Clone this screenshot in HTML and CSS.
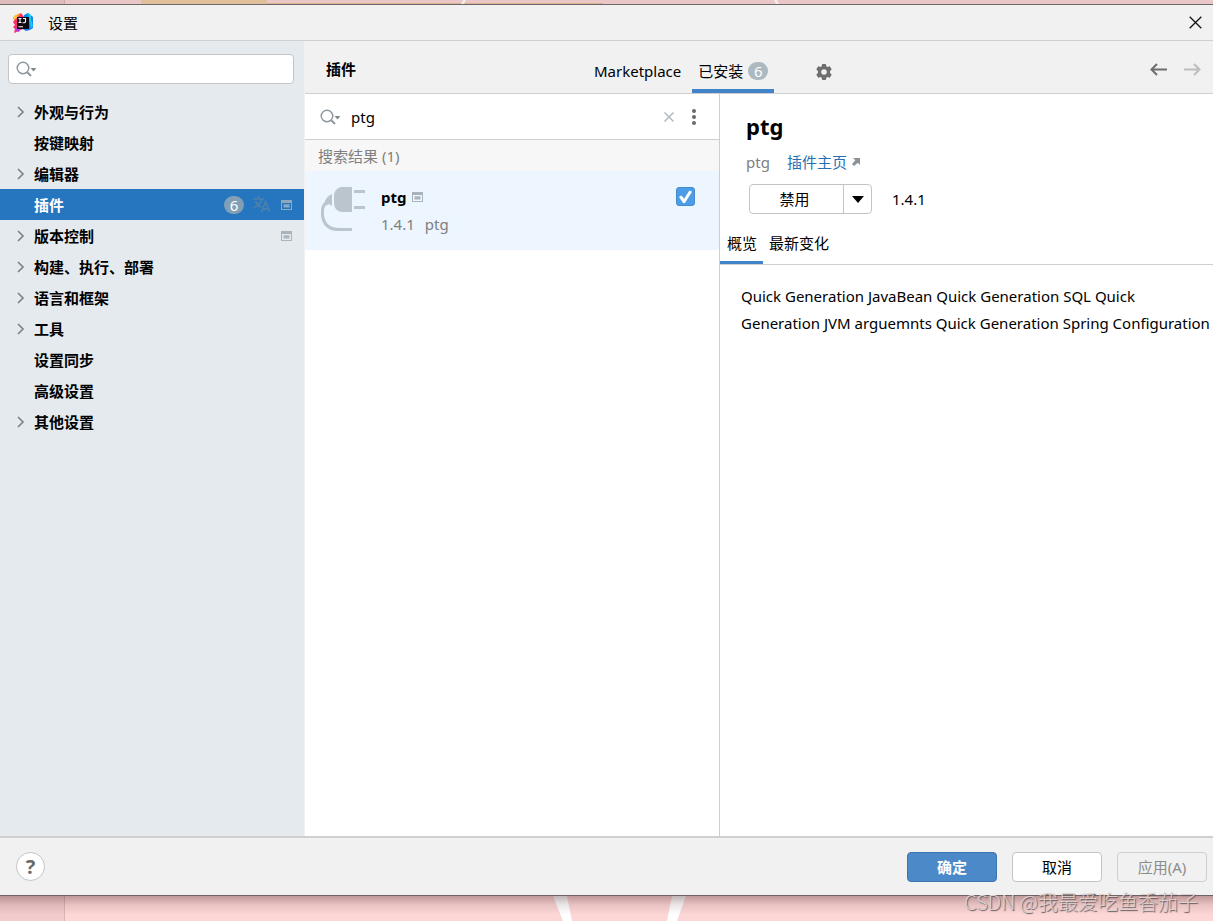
FILE: index.html
```
<!DOCTYPE html>
<html lang="zh-CN">
<head>
<meta charset="utf-8">
<title>设置</title>
<link rel="stylesheet" href="styles.css">
</head>
<body>
<svg class="defs" aria-hidden="true">
  <symbol id="chevron" viewBox="0 0 8 12"><path d="M1 1l5 5-5 5" fill="none" stroke="#7f8487" stroke-width="1.700"/></symbol>
  <symbol id="search" viewBox="0 0 22 16"><circle cx="7" cy="7" r="5.800" fill="none" stroke="#8b969d" stroke-width="1.400"/><path d="M11 11l4 4" stroke="#8b969d" stroke-width="2"/><path d="M14.500 7h6l-3 3.500z" fill="#7f8b91"/></symbol>
  <symbol id="project" viewBox="0 0 11 10"><path d="M0 0h11v10H0zM1 3v6h9V3z" fill="currentColor" fill-rule="evenodd"/><path d="M2.500 4.300h6v3.200h-6z" fill="currentColor"/></symbol>
</svg>
<div class="desktop-top"><svg viewBox="0 0 1213 4" preserveAspectRatio="none" aria-hidden="true"><path fill="#ebc6c7" d="M0 0h1213v4H0z"/><path fill="#dfbcbc" d="M0 0h64v4H0z"/><path fill="#c9aaab" d="M64 0h1v4h-1z"/><path fill="#dfc09b" d="M141 0h126v4H141z"/><path fill="#d7b492" d="M267 3h336v1H267z"/><path fill="#f1eded" d="M461 4l2-4h3l-2 4zM774 0h3l2 4h-3z"/></svg></div>
<div class="window">
  <header class="titlebar">
    <svg class="logo" viewBox="0 0 20 20" aria-hidden="true">
      <path fill="#ff9a1f" d="M1 3l6-3 3 3-2 7-7-1 1-2-2-1z"/>
      <path fill="#fc2d67" d="M0 9l3-4 3-2 2-3 3 4-1 12-9 4 1-4-2-2 2-2z"/>
      <path fill="#b93bd8" d="M2 15l6-1-2 5-3-1-1 2z"/>
      <path fill="#1286f5" d="M11 2l4-2 5 4v11l-3 2-4 1-5-3z"/>
      <path fill="#19c6ef" d="M15 0l3 2v4l2 7-2 2-2-8z"/>
      <path fill="#ffc34a" d="M1 3l3-1v3l-3 2z"/>
      <path fill="#120a12" d="M4 4h12v12H4z"/>
      <path d="M5.500 5.500h3M7 5.500v4M5.500 9.500h3M10 5.500h2.500v3.500l-1 .8H9.600M5.500 13.800h4.500" stroke="#fff" stroke-width="1.100" fill="none"/>
    </svg>
    <h1 class="title">设置</h1>
    <button class="icon-button" aria-label="关闭"><svg width="13" height="13" viewBox="0 0 13 13"><path d="M.7.700l11.600 11.600M12.300.700L.7 12.300" stroke="#111" stroke-width="1.300"/></svg></button>
  </header>
  <div class="content">
    <aside class="sidebar">
      <label class="side-search"><svg width="22" height="16"><use href="#search"/></svg><input type="text" aria-label="搜索设置"></label>
      <ul class="tree">
        <li><svg class="arrow"><use href="#chevron"/></svg><span>外观与行为</span></li>
        <li><i class="arrow"></i><span>按键映射</span></li>
        <li><svg class="arrow"><use href="#chevron"/></svg><span>编辑器</span></li>
        <li class="selected"><i class="arrow"></i><span>插件</span>
          <b class="count">6</b>
          <svg class="translate" viewBox="0 0 18 17" aria-hidden="true"><path d="M0 3h11M5.500 0v3M9 3C8 7 4 10 1 11.500M2.500 5c1 3 3.500 5 6 6.500M8.500 16l4-10 4.500 10M10 12.800h5.500" fill="none" stroke="currentColor" stroke-width="1.700"/></svg>
          <svg class="project"><use href="#project"/></svg></li>
        <li><svg class="arrow"><use href="#chevron"/></svg><span>版本控制</span><svg class="project"><use href="#project"/></svg></li>
        <li><svg class="arrow"><use href="#chevron"/></svg><span>构建、执行、部署</span></li>
        <li><svg class="arrow"><use href="#chevron"/></svg><span>语言和框架</span></li>
        <li><svg class="arrow"><use href="#chevron"/></svg><span>工具</span></li>
        <li><i class="arrow"></i><span>设置同步</span></li>
        <li><i class="arrow"></i><span>高级设置</span></li>
        <li><svg class="arrow"><use href="#chevron"/></svg><span>其他设置</span></li>
      </ul>
    </aside>
    <main class="main">
      <div class="toolbar">
        <h2 class="toolbar-title">插件</h2>
        <nav class="tabs">
          <button class="tab">Marketplace</button>
          <button class="tab active">已安装<b class="count">6</b></button>
        </nav>
        <button class="icon-button gear" aria-label="插件设置"><svg width="16" height="16" viewBox="0 0 16 16"><path fill="#6e6e6e" fill-rule="evenodd" d="M6.200 0h3.600l.5 2.300 1.300.8 2.300-.8 1.800 3.100L14 7v2l1.700 1.600-1.800 3.100-2.300-.8-1.300.8-.5 2.300H6.200l-.5-2.300-1.300-.8-2.300.8-1.800-3.100L2 9V7L.3 5.400l1.800-3.100 2.300.8 1.300-.8zM8 5.200a2.800 2.800 0 1 0 0 5.600 2.800 2.800 0 0 0 0-5.600z"/></svg></button>
        <div class="history">
          <button class="icon-button" aria-label="后退"><svg width="17" height="13" viewBox="0 0 17 13"><path d="M17 6.500H2M7 1L1.500 6.500 7 12" fill="none" stroke="#6e6e6e" stroke-width="2"/></svg></button>
          <button class="icon-button" aria-label="前进" disabled><svg width="17" height="13" viewBox="0 0 17 13"><path d="M0 6.500h15M10 1l5.500 5.500L10 12" fill="none" stroke="#bdbdbd" stroke-width="2"/></svg></button>
        </div>
      </div>
      <div class="panes">
        <section class="list">
          <div class="filter">
            <svg width="22" height="16"><use href="#search"/></svg>
            <input type="text" value="ptg" aria-label="搜索插件">
            <button class="icon-button" aria-label="清除"><svg width="10" height="10" viewBox="0 0 10 10"><path d="M.5.500l9 9M9.500.500l-9 9" stroke="#adb4b8" stroke-width="1.300"/></svg></button>
            <button class="icon-button" aria-label="更多"><svg width="4" height="16" viewBox="0 0 4 16"><g fill="#6a6a6a"><circle cx="2" cy="2" r="2"/><circle cx="2" cy="8" r="2"/><circle cx="2" cy="14" r="2"/></g></svg></button>
          </div>
          <h3 class="results">搜索结果 (1)</h3>
          <article class="plugin">
            <svg class="plug" viewBox="0 0 44 44" aria-hidden="true"><path fill="#bac5ce" d="M20 0h11v25H20q-7-2-7-9V9q0-7 7-9zM33 3h11v3H33zM33 19h11v3H33zM4 14q2-5 7-7v12l-3-2-4 2z"/><path d="M6 15q-4.500 3-4.500 9v4Q3 42 17 42.500h14" fill="none" stroke="#bac5ce" stroke-width="3"/></svg>
            <div class="plugin-text">
              <h4>ptg <svg class="project"><use href="#project"/></svg></h4>
              <p><span>1.4.1</span><span>ptg</span></p>
            </div>
            <input class="check" type="checkbox" checked aria-label="启用 ptg">
          </article>
        </section>
        <section class="details">
          <div class="summary">
            <h2>ptg</h2>
            <p class="vendor"><span>ptg</span><a href="#">插件主页<svg width="8" height="8" viewBox="0 0 8 8"><path d="M1 0h7v7L5.800 4.800 2 8 0 6l3.300-3.700z" fill="#8b9298"/></svg></a></p>
            <div class="actions">
              <div class="split"><button>禁用</button><button class="drop" aria-label="更多操作"><svg width="12" height="7" viewBox="0 0 12 7"><path d="M0 0h12L6 7z"/></svg></button></div>
              <span>1.4.1</span>
            </div>
          </div>
          <nav class="subtabs"><button class="active">概览</button><button>最新变化</button></nav>
          <p class="description">Quick Generation JavaBean Quick Generation SQL Quick<br>Generation JVM arguemnts Quick Generation Spring Configuration</p>
        </section>
      </div>
    </main>
  </div>
  <footer class="footer">
    <button class="help" aria-label="帮助">?</button>
    <button class="button primary">确定</button>
    <button class="button">取消</button>
    <button class="button" disabled>应用(A)</button>
  </footer>
</div>
<div class="desktop-bottom"><svg viewBox="0 0 1213 25" preserveAspectRatio="none" aria-hidden="true"><defs><linearGradient id="shade" x2="0" y2="1"><stop stop-color="#502a2e" stop-opacity=".36"/><stop offset=".35" stop-color="#502a2e" stop-opacity=".12"/><stop offset=".75" stop-color="#502a2e" stop-opacity="0"/></linearGradient></defs><path fill="#fdd6d6" d="M0 0h1213v25H0z"/><path fill="#f2cccc" d="M0 0h64v25H0z"/><path fill="#d6b5b7" d="M64 0h1v25h-1z"/><path fill="#fff" d="M553 0h14l5 25h-9zM672 0h14l-9 25h-10z"/><path fill="url(#shade)" d="M0 0h1213v25H0z"/></svg></div>
<div class="watermark">CSDN @我最爱吃鱼香茄子</div>
</body>
</html>
```
FILE: styles.css
```
* { box-sizing: border-box; }
body, h1, h2, h3, h4, p, ul { margin: 0; padding: 0; }
body {
  height: 100vh;
  display: flex;
  flex-direction: column;
  overflow: hidden;
  font: 15px/20px "Noto Sans", "Noto Sans CJK SC", sans-serif;
  color: #000;
}
button, input { font: inherit; color: inherit; }
button { padding: 0; border: 0; background: none; }
h1, h2, h3, h4 { font-size: 15px; }
svg { display: block; flex: none; }
.defs { position: absolute; width: 0; height: 0; }

.desktop-top { height: 4px; flex: none; }
.desktop-bottom { height: 25px; flex: none; }
.desktop-top svg, .desktop-bottom svg { width: 100%; height: 100%; }

.window {
  flex: 1;
  min-height: 0;
  display: flex;
  flex-direction: column;
  background: #f1f1f1;
  border-top: 1px solid #6d6769;
  border-bottom: 1px solid #6d6264;
}
.titlebar {
  height: 36px;
  flex: none;
  display: flex;
  align-items: center;
  padding: 0 11px 0 13px;
  border-bottom: 1px solid #cfcfcf;
}
.logo { width: 20px; height: 20px; }
.title { flex: 1; margin-left: 15px; font-weight: 400; }
.icon-button { display: flex; align-items: center; justify-content: center; }

.content { flex: 1; min-height: 0; display: flex; }
.sidebar { width: 305px; flex: none; background: #e5eaee; border-right: 1px solid #f1f1f1; }
.side-search {
  display: flex;
  align-items: center;
  height: 30px;
  margin: 13px 10px 12px 8px;
  padding-left: 7px;
  background: #fff;
  border: 1px solid #c3c5c7;
  border-radius: 4px;
}
.side-search input, .filter input { flex: 1; min-width: 0; border: 0; outline: 0; background: none; }
.tree { list-style: none; font-weight: 700; }
.tree li { display: flex; align-items: center; height: 31px; padding: 0 12px 0 17px; }
.tree span { flex: 1; }
.arrow { width: 8px; height: 12px; margin-right: 9px; }
.tree .selected { background: #2675bf; color: #fff; }
.count {
  min-width: 20px;
  height: 18px;
  border-radius: 9px;
  background: #adb9c0;
  color: #fff;
  font-weight: 400;
  line-height: 18px;
  text-align: center;
}
.selected .count { background: #839fb6; }
.translate { width: 18px; height: 17px; margin: 0 10px 0 9px; color: #4b80ac; }
.project { width: 11px; height: 10px; color: #a9b4bc; }
.selected .project { color: #8da9c0; }

.main { flex: 1; min-width: 0; display: flex; flex-direction: column; }
.toolbar { height: 53px; flex: none; display: flex; align-items: center; padding: 0 12px 0 21px; border-bottom: 1px solid #cfcfcf; }
.toolbar-title { width: 262px; padding-top: 4px; }
.tabs { display: flex; gap: 5px; align-self: stretch; }
.tab { padding: 12px 6px 0; border-bottom: 4px solid transparent; display: flex; align-items: center; gap: 5px; }
.tab.active { border-color: #4083c9; }
.gear { margin: 10px 0 0 42px; }
.history { display: flex; gap: 17px; margin-left: auto; padding-top: 4px; }
.panes { flex: 1; min-height: 0; display: flex; background: #fff; }
.list { width: 415px; flex: none; border-right: 1px solid #cfcfcf; }
.filter { display: flex; align-items: center; height: 46px; gap: 9px; padding: 0 23px 0 15px; border-bottom: 1px solid #cfcfcf; }
.filter input { padding: 0; }
.filter button + button { margin-left: 9px; }
.results { height: 31px; padding: 6px 13px; background: #f7f7f7; color: #808080; font-weight: 400; }
.plugin { display: flex; align-items: flex-start; height: 79px; padding: 16px 24px 0 16px; background: #edf5fe; }
.plug { width: 44px; height: 44px; }
.plugin-text { flex: 1; margin-left: 16px; }
.plugin h4 { display: flex; align-items: center; gap: 6px; height: 20px; }
.plugin p { display: flex; gap: 10px; margin-top: 7px; color: #808080; }
.check {
  appearance: none;
  width: 19px;
  height: 19px;
  margin: 0;
  border: 1px solid #438bd1;
  border-radius: 3px;
  background: #4d9ce5;
  display: grid;
  place-items: center;
}
.check::before {
  content: "";
  width: 13px;
  height: 13px;
  background: #fff;
  clip-path: polygon(0 54%, 17% 43%, 40% 68%, 80% 4%, 100% 14%, 46% 100%, 32% 100%);
}

.details { flex: 1; min-width: 0; overflow: hidden; }
.summary { padding: 16px 26px 0; }
.summary h2 { font-size: 22px; line-height: 32px; }
.vendor { display: flex; gap: 17px; margin-top: 10px; color: #808080; }
.vendor a { display: flex; align-items: center; gap: 5px; color: #2470b3; text-decoration: none; }
.actions { display: flex; align-items: center; gap: 20px; margin: 12px 0 0 3px; }
.split { display: flex; width: 123px; height: 30px; border: 1px solid #c4c4c4; border-radius: 4px; }
.split button { flex: 1; padding-right: 4px; }
.split .drop { flex: 0 0 28px; display: grid; place-items: center; padding: 0; border-left: 1px solid #c4c4c4; }
.subtabs { display: flex; height: 51px; border-bottom: 1px solid #cfcfcf; }
.subtabs button { padding: 10px 6px 0; border-bottom: 3px solid transparent; }
.subtabs .active { border-color: #4083c9; padding-left: 7px; }
.description { padding: 18px 21px; line-height: 27px; white-space: nowrap; }

.footer { display: flex; align-items: center; gap: 15px; height: 59px; flex: none; padding: 0 6px 0 16px; border-top: 2px solid #cfcfcf; }
.help { width: 29px; height: 29px; margin-right: auto; border: 1px solid #c4c4c4; border-radius: 50%; background: #fff; color: #6a6a6a; font-size: 20px; font-weight: 700; line-height: 27px; }
.button { width: 90px; height: 30px; border: 1px solid #c4c4c4; border-radius: 4px; background: #fff; }
.button.primary { background: #4c89c8; border-color: #3d74b0; color: #fff; font-weight: 700; }
.button:disabled { background: none; border-color: #cfcfcf; color: #8c8c8c; }
.watermark {
  position: absolute;
  right: 15px;
  bottom: 5px;
  font: 300 20px/28px "Noto Sans CJK SC", sans-serif;
  color: #dccfd0;
  text-shadow: 1px 1px 1px #65585a;
}
```
